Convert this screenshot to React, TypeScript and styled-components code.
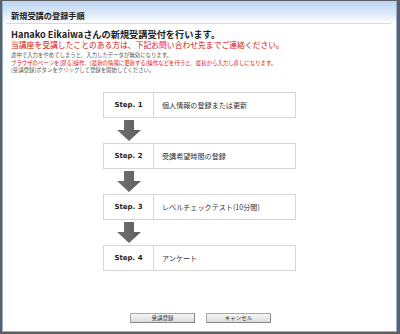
import React from "react";
import styled, { createGlobalStyle } from "styled-components";

const Global = createGlobalStyle`
  html, body { margin: 0; padding: 0; background: #fff; }
  body { font-family: "Noto Sans CJK JP", "Noto Sans", sans-serif; }
  * { box-sizing: border-box; }
`;

const Frame = styled.div`
  width: 400px;
  height: 334px;
  border-style: solid;
  border-color: #5f5f5f;
  border-width: 1px 3px 2px 2px;
`;

const Inner = styled.div`
  height: 100%;
  display: flex;
  flex-direction: column;
  background: #fff;
  border: 1px solid #8db0e2;
  border-top: none;
`;

const Header = styled.div`
  height: 22px;
  padding: 9px 0 3px 8px;
  background: linear-gradient(#bcd5f4 0%, #dde9f9 55%, #ffffff 100%);
`;

const Title = styled.h1`
  margin: 0;
  font-size: 8.2px;
  line-height: 10px;
  font-weight: 700;
  color: #222;
  white-space: nowrap;
`;

const Divider = styled.div`
  height: 1px;
  margin: 0 5px 0 3px;
  background: #dadada;
`;

const Intro = styled.div`
  padding: 5px 0 0 8px;
`;

const Lead = styled.p`
  margin: 0;
  font-size: 9.2px;
  line-height: 11px;
  font-weight: 700;
  color: #222;
  white-space: nowrap;
`;

const Warn = styled.p`
  margin: 0 0 3px;
  font-size: 7.8px;
  line-height: 9px;
  color: #e01010;
  white-space: nowrap;
`;

const Note = styled.p<{ $red?: boolean }>`
  margin: 0;
  font-size: 5.4px;
  line-height: 7.5px;
  color: ${(p) => (p.$red ? "#e01010" : "#555")};
  white-space: nowrap;
`;

const Steps = styled.div`
  margin-top: 17px;
  display: flex;
  flex-direction: column;
  align-items: center;
`;

const StepBox = styled.div`
  width: 193px;
  height: 26px;
  display: flex;
  border: 1px solid #d6d6d6;
  background: #fff;
`;

const StepLabel = styled.div`
  width: 50px;
  display: flex;
  align-items: center;
  justify-content: center;
  border-right: 1px solid #d6d6d6;
  font-family: "DejaVu Sans", Verdana, sans-serif;
  font-weight: 700;
  font-size: 7px;
  color: #222;
`;

const StepText = styled.div`
  flex: 1;
  display: flex;
  align-items: center;
  padding-left: 8px;
  font-size: 7.1px;
  color: #333;
  white-space: nowrap;
`;

const ArrowRow = styled.div`
  width: 193px;
  height: 25px;
  display: flex;
`;

const ArrowCell = styled.div`
  width: 51px;
  display: flex;
  justify-content: center;
  padding-top: 2px;
`;

const Spacer = styled.div`
  flex: 1;
`;

const Buttons = styled.div`
  display: flex;
  justify-content: center;
  gap: 11px;
  padding: 0 0 8px 2px;
`;

const Button = styled.button`
  width: 65px;
  height: 10px;
  padding: 0;
  border: 1px solid #a8a8a8;
  border-right-color: #888;
  border-bottom-color: #888;
  background: linear-gradient(#f6f6f6, #dcdcdc);
  font-family: "Noto Sans CJK JP", sans-serif;
  font-size: 5.5px;
  line-height: 8px;
  color: #333;
`;

const Arrow = () => (
  <svg width="24" height="21" viewBox="0 0 24 21">
    <defs>
      <linearGradient id="ag" x1="0" x2="1" y1="0" y2="0">
        <stop offset="0" stopColor="#727272" />
        <stop offset="1" stopColor="#5e5e5e" />
      </linearGradient>
    </defs>
    <path d="M7 0 H17 V10 H24 L12 21 L0 10 H7 Z" fill="url(#ag)" />
  </svg>
);

const steps = [
  "個人情報の登録または更新",
  "受講希望時間の登録",
  "レベルチェックテスト(10分間)",
  "アンケート",
];

export default function App() {
  return (
    <>
      <Global />
      <Frame>
        <Inner>
          <Header>
            <Title>新規受講の登録手順</Title>
          </Header>
          <Divider />
          <Intro>
            <Lead>Hanako Eikaiwaさんの新規受講受付を行います。</Lead>
            <Warn>当講座を受講したことのある方は、下記お問い合わせ先までご連絡ください。</Warn>
            <Note>途中で入力をやめてしまうと、入力したデータが無効になります。</Note>
            <Note $red>ブラウザのページを[戻る]操作、[最新の情報に更新する]操作などを行うと、最初から入力し直しになります。</Note>
            <Note>[受講登録]ボタンをクリックして登録を開始してください。</Note>
          </Intro>
          <Steps>
            {steps.map((s, i) => (
              <React.Fragment key={s}>
                {i > 0 && (
                  <ArrowRow>
                    <ArrowCell>
                      <Arrow />
                    </ArrowCell>
                  </ArrowRow>
                )}
                <StepBox>
                  <StepLabel>Step. {i + 1}</StepLabel>
                  <StepText>{s}</StepText>
                </StepBox>
              </React.Fragment>
            ))}
          </Steps>
          <Spacer />
          <Buttons>
            <Button>受講登録</Button>
            <Button>キャンセル</Button>
          </Buttons>
        </Inner>
      </Frame>
    </>
  );
}
